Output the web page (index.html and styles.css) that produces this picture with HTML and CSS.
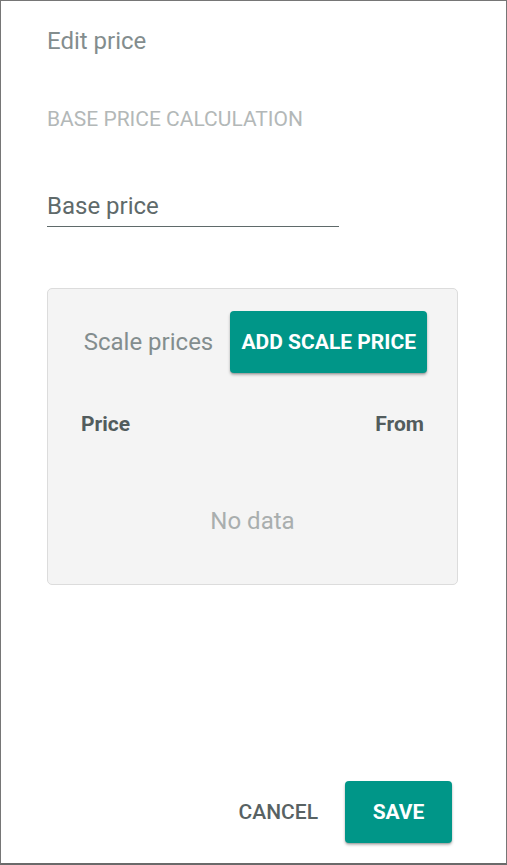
FILE: index.html
```html
<!DOCTYPE html>
<html lang="en">
<head>
<meta charset="utf-8">
<title>Edit price</title>
<link rel="stylesheet" href="styles.css">
</head>
<body>
<div class="dialog">
  <h1 class="title">Edit price</h1>
  <div class="section-label">BASE PRICE CALCULATION</div>
  <div class="field">
    <div class="field-input">Base price</div>
  </div>
  <div class="card">
    <div class="card-head">
      <span class="card-title">Scale prices</span>
      <button class="btn btn-raised btn-add">ADD SCALE PRICE</button>
    </div>
    <div class="table-head">
      <span>Price</span>
      <span>From</span>
    </div>
    <div class="empty">No data</div>
  </div>
  <div class="spacer"></div>
  <div class="actions">
    <button class="btn btn-text">CANCEL</button>
    <button class="btn btn-raised btn-save">SAVE</button>
  </div>
</div>
</body>
</html>
```

FILE: styles.css
```css
* { box-sizing: border-box; }
html, body { margin: 0; padding: 0; background: #fff; }
body { font-family: Roboto, "Noto Sans", Arial, sans-serif; }

.dialog {
  width: 507px;
  height: 865px;
  border: 1px solid #767676;
  border-bottom: 2px solid #6a6a6a;
  display: flex;
  flex-direction: column;
  padding: 0 48px 20px 46px;
}

.title {
  margin: 26px 0 0;
  font-size: 24px;
  font-weight: 400;
  line-height: 28px;
  color: #838d8e;
}

.section-label {
  margin-top: 52px;
  font-size: 21px;
  line-height: 24px;
  color: #b3b8b8;
}

.field {
  margin-top: 61px;
  width: 292px;
  border-bottom: 1px solid #5f6a6a;
  padding-bottom: 6px;
}
.field-input {
  font-size: 24px;
  line-height: 28px;
  color: #5f6a6a;
}

.card {
  margin-top: 61px;
  height: 297px;
  background: #f4f4f4;
  border: 1px solid #dcdcdc;
  border-radius: 5px;
  padding: 22px 33px 0 33px;
}

.card-head {
  display: flex;
  align-items: center;
  justify-content: center;
  gap: 17px;
  margin: 0 -30px;
  padding-left: 6px;
}
.card-title {
  font-size: 24px;
  color: #838d8e;
  white-space: nowrap;
}

.btn {
  font-family: inherit;
  border: 0;
  background: none;
  cursor: pointer;
  font-size: 21px;
  font-weight: 700;
  letter-spacing: 0;
  height: 62px;
  white-space: nowrap;
  flex-shrink: 0;
}
.btn-raised {
  background: #009688;
  color: #fff;
  border-radius: 4px;
  box-shadow: 0 2px 3px rgba(0,0,0,0.28), 0 1px 1px rgba(0,0,0,0.12);
}
.btn-add { width: 197px; padding: 0; }
.btn-save { width: 107px; padding: 0; }
.btn-text {
  color: #586263;
  font-weight: 500;
  padding: 0 12px;
}

.table-head {
  display: flex;
  justify-content: space-between;
  margin-top: 39px;
  font-size: 21px;
  font-weight: 700;
  line-height: 24px;
  color: #525c5d;
}

.empty {
  margin-top: 71px;
  text-align: center;
  font-size: 24px;
  line-height: 28px;
  color: #a9aeae;
}

.spacer { flex: 1; }

.actions {
  display: flex;
  justify-content: flex-end;
  align-items: center;
  gap: 15px;
  padding-right: 6px;
}
```
